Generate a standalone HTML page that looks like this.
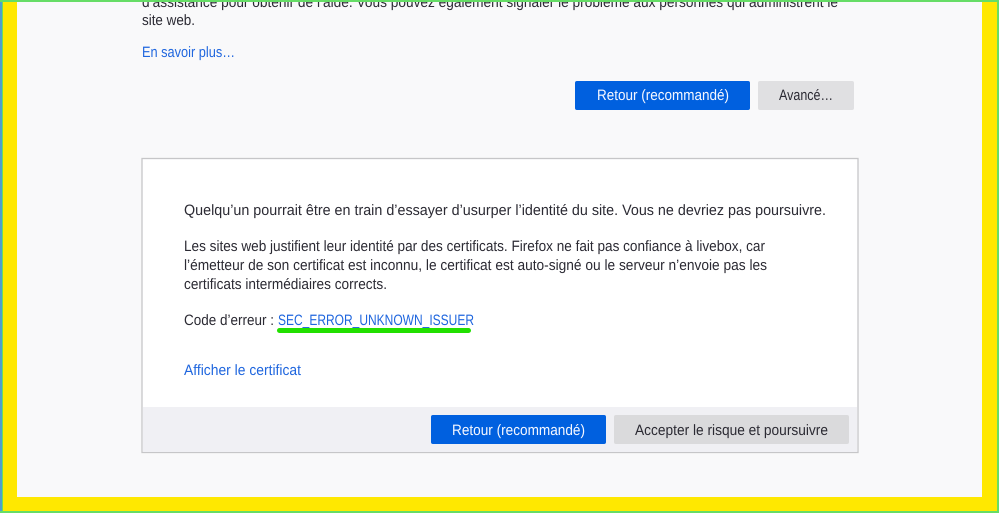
<!DOCTYPE html>
<html lang="fr">
<head>
<meta charset="utf-8">
<title>Avertissement</title>
<style>
html,body{margin:0;padding:0;width:999px;height:513px;overflow:hidden;background:#fff}
svg{display:block}
text{font-family:"Liberation Sans",sans-serif;font-size:15px;fill:#2b2a33;text-rendering:geometricPrecision}
.l{fill:#1f66de}
.w{fill:#f4f7ff}
</style>
</head>
<body>
<svg width="999" height="513" viewBox="0 0 999 513" xmlns="http://www.w3.org/2000/svg">
<rect width="999" height="513" fill="#66dd66"/>
<rect x="0" y="2" width="2" height="509" fill="#4f9fd0"/>
<rect x="3" y="2" width="994" height="509" fill="#ffe800"/>
<rect x="17" y="2" width="965" height="495" fill="#f9f9fa"/>

<text x="142" y="7" textLength="696" lengthAdjust="spacingAndGlyphs">d’assistance pour obtenir de l’aide. Vous pouvez également signaler le problème aux personnes qui administrent le</text>
<rect x="0" y="0" width="999" height="2" fill="#66dd66"/>
<text x="142" y="25" textLength="53" lengthAdjust="spacingAndGlyphs">site web.</text>
<text class="l" x="142" y="57" textLength="93" lengthAdjust="spacingAndGlyphs">En savoir plus…</text>

<rect x="575" y="81" width="175" height="29" rx="2" fill="#0060df"/>
<text class="w" x="597" y="100" textLength="132" lengthAdjust="spacingAndGlyphs">Retour (recommandé)</text>
<rect x="758" y="81" width="96" height="29" rx="2" fill="#e0e0e2"/>
<text x="779" y="100" textLength="54" lengthAdjust="spacingAndGlyphs">Avancé…</text>

<rect x="142" y="158.500" width="716" height="294" fill="#fff" stroke="#c6c6c8" stroke-width="1.300"/>
<rect x="143" y="407" width="714" height="45" fill="#f0f0f4"/>

<text x="184" y="215" textLength="642" lengthAdjust="spacingAndGlyphs">Quelqu’un pourrait être en train d’essayer d’usurper l’identité du site. Vous ne devriez pas poursuivre.</text>
<text x="184" y="251" textLength="581" lengthAdjust="spacingAndGlyphs">Les sites web justifient leur identité par des certificats. Firefox ne fait pas confiance à livebox, car</text>
<text x="184" y="270" textLength="583" lengthAdjust="spacingAndGlyphs">l’émetteur de son certificat est inconnu, le certificat est auto-signé ou le serveur n’envoie pas les</text>
<text x="184" y="289" textLength="203" lengthAdjust="spacingAndGlyphs">certificats intermédiaires corrects.</text>
<text x="184" y="325" textLength="90" lengthAdjust="spacingAndGlyphs">Code d’erreur :</text>
<text class="l" x="278" y="325" textLength="196" lengthAdjust="spacingAndGlyphs">SEC_ERROR_UNKNOWN_ISSUER</text>
<rect x="277" y="328" width="194" height="5" rx="2.500" fill="#22e000"/>
<text class="l" x="184" y="375" textLength="117" lengthAdjust="spacingAndGlyphs">Afficher le certificat</text>

<rect x="431" y="415" width="175" height="29" rx="2" fill="#0060df"/>
<text class="w" x="452" y="435" textLength="133" lengthAdjust="spacingAndGlyphs">Retour (recommandé)</text>
<rect x="614" y="415" width="235" height="29" rx="2" fill="#dadadc"/>
<text x="635" y="435" textLength="193" lengthAdjust="spacingAndGlyphs">Accepter le risque et poursuivre</text>
</svg>
</body>
</html>
